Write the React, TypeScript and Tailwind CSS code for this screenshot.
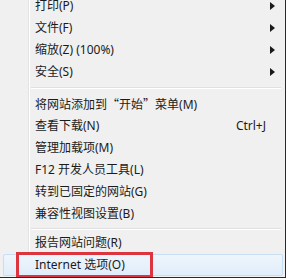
const font = { fontFamily: '"Segoe UI", "Noto Sans", "Noto Sans CJK SC", sans-serif' };

type Item = { label: React.ReactNode; key: string; sub?: boolean; shortcut?: string };

// full-width quotes, drawn in the CJK face like the original
const Q = ({ c }: { c: string }) => (
  <span style={{ fontFamily: '"Noto Sans CJK SC", sans-serif' }}>{c}</span>
);

const groupA: Item[] = [
  { key: "p", label: "打印(P)", sub: true },
  { key: "f", label: "文件(F)", sub: true },
  { key: "z", label: "缩放(Z) (100%)", sub: true },
  { key: "s", label: "安全(S)", sub: true },
];

const groupB: Item[] = [
  {
    key: "m1",
    label: (
      <>
        将网站添加到<Q c="“" />开始<Q c="”" />菜单(M)
      </>
    ),
  },
  { key: "n", label: "查看下载(N)", shortcut: "Ctrl+J" },
  { key: "m2", label: "管理加载项(M)" },
  { key: "l", label: "F12 开发人员工具(L)" },
  { key: "g", label: "转到已固定的网站(G)" },
  { key: "b", label: "兼容性视图设置(B)" },
];

function Arrow() {
  return (
    <svg width="5" height="8" viewBox="0 0 5 8" className="mr-[10px]">
      <path d="M0 0 L5 4 L0 8 Z" fill="#1a1a1a" />
    </svg>
  );
}

function Row({ item }: { item: Item }) {
  return (
    <div className="flex h-[22px]">
      <div className="w-[29px] shrink-0 border-r border-[#e2e3e3]" />
      <div className="flex flex-1 items-center justify-between border-l border-white pl-[5px]">
        <span>{item.label}</span>
        {item.sub && <Arrow />}
        {item.shortcut && <span className="mr-[19px]">{item.shortcut}</span>}
      </div>
    </div>
  );
}

function Sep({ h }: { h: string }) {
  return (
    <div className={`flex ${h}`}>
      <div className="w-[29px] shrink-0 border-r border-[#e2e3e3]" />
      <div className="flex flex-1 flex-col justify-center border-l border-white pl-[1px] pr-[4px]">
        <div className="h-px bg-[#e0e0e0]" />
        <div className="h-px bg-white" />
      </div>
    </div>
  );
}

export default function App() {
  return (
    <div
      className="relative h-[278px] w-[286px] overflow-hidden border-b border-r border-[#2a2a2a] bg-[#f0f0f0] text-[12px] text-[#1b1b1b]"
      style={font}
    >
      <div className="-mt-[5px] flex flex-col">
        {groupA.map((it) => (
          <Row key={it.key} item={it} />
        ))}
        <Sep h="h-[10px]" />
        {groupB.map((it) => (
          <Row key={it.key} item={it} />
        ))}
        <Sep h="h-[7px]" />
        <Row item={{ key: "r", label: "报告网站问题(R)" }} />
        <div className="flex h-[22px] pl-[3px] pr-[2px]">
          <div className="flex flex-1 items-center rounded-[2px] border border-[#c8def3] bg-gradient-to-b from-[#eef5fc] to-[#e0edfa] pl-[31px]">
            Internet 选项(O)
          </div>
        </div>
      </div>
      {/* red highlight box */}
      <div className="absolute left-[16px] top-[252px] h-[26px] w-[137px] border-[3px] border-[#dc3540]" />
    </div>
  );
}
